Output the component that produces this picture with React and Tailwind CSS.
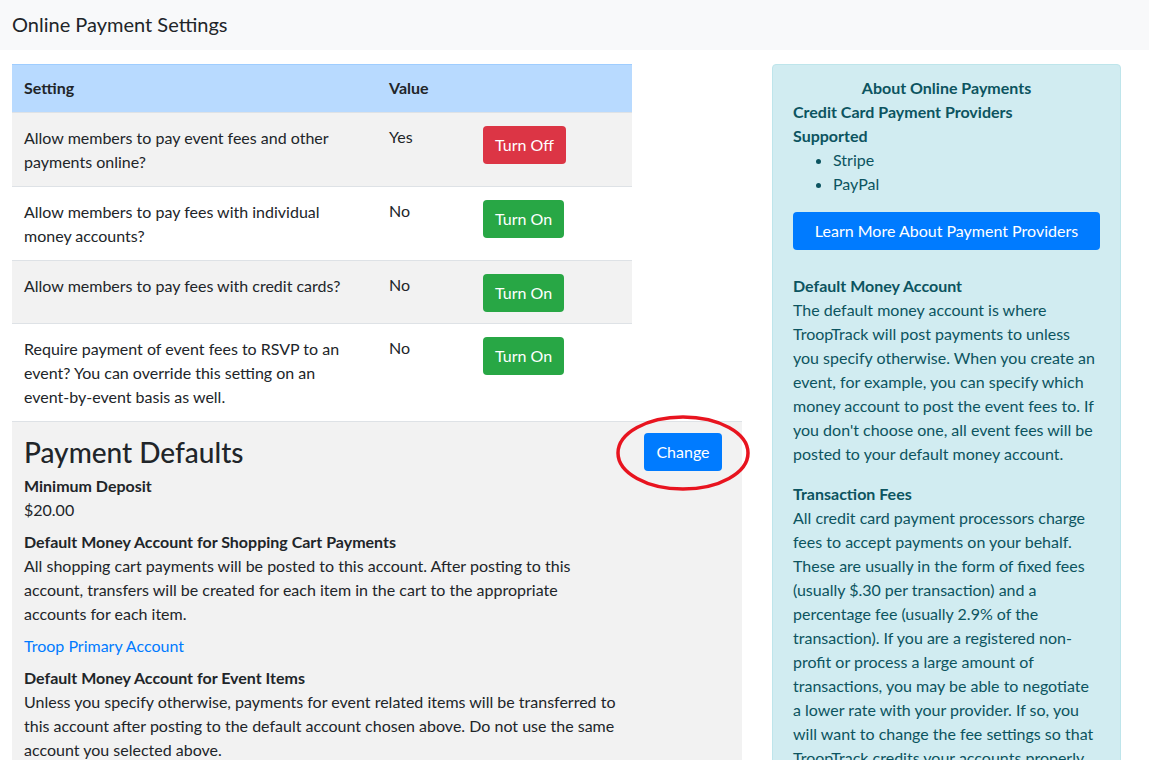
const rows = [
  { text: ["Allow members to pay event fees and other", "payments online?"], value: "Yes", on: true, striped: true },
  { text: ["Allow members to pay fees with individual", "money accounts?"], value: "No", on: false, striped: false },
  { text: ["Allow members to pay fees with credit cards?"], value: "No", on: false, striped: true },
  {
    text: ["Require payment of event fees to RSVP to an", "event? You can override this setting on an", "event-by-event basis as well."],
    value: "No",
    on: false,
    striped: false,
  },
];

function Lines({ lines }) {
  return lines.map((l, i) => (
    <span key={i} className="block">
      {l}
    </span>
  ));
}

export default function App() {
  return (
    <div className="min-h-[760px] bg-white text-[16px] leading-[24px] text-[#212529]" style={{ fontFamily: "Lato, 'Noto Sans', sans-serif" }}>
      <div className="flex h-[50px] items-center bg-[#f8f9fa] px-[12px] pb-[2px]">
        <h1 className="text-[20px] leading-[24px]">Online Payment Settings</h1>
      </div>

      <div className="flex gap-[30px] pl-[12px] pt-[14px]">
        {/* left column */}
        <div className="w-[730px] shrink-0">
          <table className="w-[620px] border-collapse">
            <thead>
              <tr className="border-t border-[#9fcdff] bg-[#b8daff]">
                <th className="h-[48px] w-[365px] px-[12px] pb-[2px] text-left font-bold">Setting</th>
                <th className="w-[94px] px-[12px] pb-[2px] text-left font-bold">Value</th>
                <th className="px-[12px]"></th>
              </tr>
            </thead>
            <tbody>
              {rows.map((r, i) => (
                <tr key={i} className={`border-t border-[#dee2e6] ${r.striped ? "bg-[#f2f2f2]" : "bg-white"}`}>
                  <td className="px-[12px] pb-[12px] pt-[13px] align-top">
                    <Lines lines={r.text} />
                  </td>
                  <td className="px-[12px] pb-[12px] pt-[12px] align-top">{r.value}</td>
                  <td className="px-[12px] pb-[11px] pt-[13px] align-top">
                    <button
                      className={`block h-[38px] rounded-[4px] px-[12px] text-[16px] text-white ${r.on ? "bg-[#dc3545]" : "bg-[#28a745]"}`}
                    >
                      {r.on ? "Turn Off" : "Turn On"}
                    </button>
                  </td>
                </tr>
              ))}
            </tbody>
          </table>

          <div className="relative border-t border-[#dee2e6] bg-[#f2f2f2] pb-[10px] pl-[12px] pr-[20px] pt-[11px]">
            <div className="flex items-start justify-between">
              <h2 className="pt-[2px] text-[28px] leading-[34px] font-medium">Payment Defaults</h2>
              <button className="h-[38px] w-[78px] rounded-[4px] bg-[#007bff] text-[16px] text-white">Change</button>
            </div>
            <svg className="pointer-events-none absolute left-[604px] top-[-8px]" width="138" height="80" viewBox="0 0 138 80">
              <ellipse cx="67" cy="39" rx="65" ry="36" fill="none" stroke="#e8141f" strokeWidth="3.5" />
            </svg>
            <p className="mt-[3px] font-bold">Minimum Deposit</p>
            <p>$20.00</p>
            <p className="mt-[8px] font-bold">Default Money Account for Shopping Cart Payments</p>
            <Lines
              lines={[
                "All shopping cart payments will be posted to this account. After posting to this",
                "account, transfers will be created for each item in the cart to the appropriate",
                "accounts for each item.",
              ]}
            />
            <p className="mt-[8px] text-[#007bff]">Troop Primary Account</p>
            <p className="mt-[8px] font-bold">Default Money Account for Event Items</p>
            <Lines
              lines={[
                "Unless you specify otherwise, payments for event related items will be transferred to",
                "this account after posting to the default account chosen above. Do not use the same",
                "account you selected above.",
              ]}
            />
          </div>
        </div>

        {/* right sidebar */}
        <div className="w-[349px] shrink-0 self-start rounded-t-[4px] border border-[#bee5eb] bg-[#d1ecf1] px-[20px] pt-[11px] text-[#0c5460]">
          <p className="text-center font-bold">About Online Payments</p>
          <p className="font-bold">
            Credit Card Payment Providers
            <br />
            Supported
          </p>
          <ul className="list-disc pl-[40px]">
            <li>Stripe</li>
            <li>PayPal</li>
          </ul>
          <button className="mt-[16px] h-[38px] w-full rounded-[4px] bg-[#007bff] text-[16px] text-white">
            Learn More About Payment Providers
          </button>
          <p className="mt-[24px] font-bold">Default Money Account</p>
          <Lines
            lines={[
              "The default money account is where",
              "TroopTrack will post payments to unless",
              "you specify otherwise. When you create an",
              "event, for example, you can specify which",
              "money account to post the event fees to. If",
              "you don't choose one, all event fees will be",
              "posted to your default money account.",
            ]}
          />
          <p className="mt-[16px] font-bold">Transaction Fees</p>
          <Lines
            lines={[
              "All credit card payment processors charge",
              "fees to accept payments on your behalf.",
              "These are usually in the form of fixed fees",
              "(usually $.30 per transaction) and a",
              "percentage fee (usually 2.9% of the",
              "transaction). If you are a registered non-",
              "profit or process a large amount of",
              "transactions, you may be able to negotiate",
              "a lower rate with your provider. If so, you",
              "will want to change the fee settings so that",
              "TroopTrack credits your accounts properly.",
            ]}
          />
        </div>
      </div>
    </div>
  );
}
